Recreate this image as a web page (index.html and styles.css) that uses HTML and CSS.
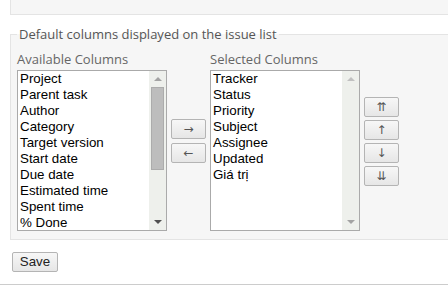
FILE: index.html
```html
<!DOCTYPE html>
<html lang="en">
<head>
  <meta charset="UTF-8">
  <title>Settings - Issue tracking</title>
  <link rel="stylesheet" href="styles.css">
</head>
<body>
  <!-- phần trên của trang (bị cắt) -->
  <div class="top-box"></div>

  <form id="settingsForm">
    <fieldset class="box">
      <legend>Default columns displayed on the issue list</legend>

      <div class="columns">
        <div class="col">
          <label class="col-label">Available Columns</label>
          <div class="listbox">
            <div class="options">
              <div>Project</div>
              <div>Parent task</div>
              <div>Author</div>
              <div>Category</div>
              <div>Target version</div>
              <div>Start date</div>
              <div>Due date</div>
              <div>Estimated time</div>
              <div>Spent time</div>
              <div>% Done</div>
            </div>
            <div class="scrollbar">
              <span class="arrow-up"></span>
              <div class="track"><div class="thumb"></div></div>
              <span class="arrow-down"></span>
            </div>
          </div>
        </div>

        <div class="btn-col">
          <button type="button" class="small-btn">&rarr;</button>
          <button type="button" class="small-btn">&larr;</button>
        </div>

        <div class="col">
          <label class="col-label">Selected Columns</label>
          <div class="listbox">
            <div class="options">
              <div>Tracker</div>
              <div>Status</div>
              <div>Priority</div>
              <div>Subject</div>
              <div>Assignee</div>
              <div>Updated</div>
              <div>Giá trị</div>
            </div>
            <div class="scrollbar">
              <span class="arrow-up light"></span>
              <div class="track"></div>
              <span class="arrow-down light"></span>
            </div>
          </div>
        </div>

        <div class="btn-col order">
          <button type="button" class="small-btn">&#8648;</button>
          <button type="button" class="small-btn">&uarr;</button>
          <button type="button" class="small-btn">&darr;</button>
          <button type="button" class="small-btn">&#8650;</button>
        </div>
      </div>
    </fieldset>

    <button type="submit" class="save-btn">Save</button>
  </form>

  <div class="bottom-line"></div>
</body>
</html>
```

FILE: styles.css
```css
html, body {
  margin: 0;
  padding: 0;
  background-color: #fff;
  overflow: hidden;
}

body {
  font-family: 'Liberation Sans', Arial, sans-serif;
  font-size: 13px;
  color: #333;
}

.top-box {
  margin-left: 10px;
  height: 14px;
  background-color: #f6f6f6;
  border-left: 1px solid #e4e4e4;
  border-bottom: 1px solid #e4e4e4;
}

form {
  margin: 0;
}

/* khung cạnh phải nằm ngoài màn hình nên bỏ border-right */
fieldset.box {
  margin: 11px 0 0 10px;
  padding: 9px 6px 8px 6px;
  background-color: #f6f6f6;
  border: 1px solid #e4e4e4;
  border-right: none;
  min-width: 0;
}

legend {
  padding: 0 2px;
  font-family: 'Open Sans', 'Liberation Sans', sans-serif;
  font-size: 13px;
  line-height: 16px;
  color: #555;
}

.columns {
  display: flex;
  align-items: center;
  gap: 4px;
}

.col-label {
  display: block;
  font-family: 'Open Sans', 'Liberation Sans', sans-serif;
  font-size: 13px;
  line-height: 16px;
  margin-bottom: 3px;
  color: #666;
}

.listbox {
  display: flex;
  width: 148px;
  height: 159px;
  background-color: #fff;
  border: 1px solid #aaa;
}

.options {
  flex: 1;
  padding: 0 2px;
  font-size: 13.33px;
  line-height: 16px;
  color: #000;
  white-space: nowrap;
  overflow: hidden;
}

/* thanh cuộn vẽ tay */
.scrollbar {
  width: 17px;
  display: flex;
  flex-direction: column;
  align-items: center;
  background-color: #eef0ec;
}

.arrow-up, .arrow-down {
  display: block;
  width: 0;
  height: 0;
  border-left: 4px solid transparent;
  border-right: 4px solid transparent;
  margin: 6px 0;
}

.arrow-up {
  border-bottom: 4px solid #a3a3a3;
}

.arrow-down {
  border-top: 4px solid #505050;
}

.arrow-up.light {
  border-bottom-color: #c0c0c0;
}

.arrow-down.light {
  border-top-color: #a3a3a3;
}

.track {
  flex: 1;
  align-self: stretch;
  padding: 0 2px;
}

.thumb {
  height: 83px;
  background-color: #bdbdbd;
  border: 1px solid #acacac;
  box-sizing: border-box;
}

.btn-col {
  display: flex;
  flex-direction: column;
  gap: 4px;
}

.btn-col.order {
  gap: 3px;
}

.small-btn, .save-btn {
  font-family: 'Liberation Sans', Arial, sans-serif;
  color: #222;
  background: linear-gradient(#f7f7f7, #e6e6e6);
  border: 1px solid #b4b4b4;
  border-radius: 2px;
  padding: 0;
  cursor: pointer;
}

.small-btn {
  width: 35px;
  height: 20px;
  font-family: 'DejaVu Sans', sans-serif;
  font-size: 12px;
  line-height: 18px;
  color: #555;
}

.save-btn {
  display: block;
  margin: 12px 0 0 12px;
  width: 46px;
  height: 20px;
  font-size: 13.33px;
  line-height: 18px;
}

.save-btn:hover, .small-btn:hover {
  opacity: 0.9;
}

.bottom-line {
  margin-top: 12px;
  border-top: 1px solid #ccc;
  height: 7px;
}
```
